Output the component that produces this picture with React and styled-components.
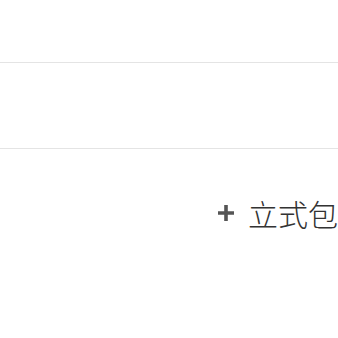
import React from "react";
import styled, { createGlobalStyle } from "styled-components";

const Global = createGlobalStyle`
  html, body { margin: 0; padding: 0; background: #ffffff; }
  body { font-family: "Noto Sans CJK SC", "Noto Sans", sans-serif; overflow: hidden; }
`;

const Page = styled.div`
  width: 338px;
  height: 338px;
  overflow: hidden;
  display: flex;
  flex-direction: column;
`;

const Section = styled.div`
  height: ${(p) => p.$h}px;
  border-bottom: 1px solid #e4e4e4;
  flex-shrink: 0;
`;

const ActionRow = styled.div`
  display: flex;
  align-items: center;
  padding: 47px 0 0 217px;
  white-space: nowrap;
`;

const AddButton = styled.div`
  display: flex;
  align-items: center;
  gap: 13px;
  color: #333333;
  font-size: 30px;
  font-weight: 300;
  line-height: 34px;
`;

const PlusIcon = () => (
  <svg width="18" height="18" viewBox="0 0 18 18" aria-hidden="true">
    <path d="M9 1v16M1 9h16" stroke="#555555" strokeWidth="3.6" fill="none" />
  </svg>
);

export default function App() {
  return (
    <>
      <Global />
      <Page>
        <Section $h={62} />
        <Section $h={85} />
        <ActionRow>
          <AddButton>
            <PlusIcon />
            <span>立式包</span>
          </AddButton>
        </ActionRow>
      </Page>
    </>
  );
}
